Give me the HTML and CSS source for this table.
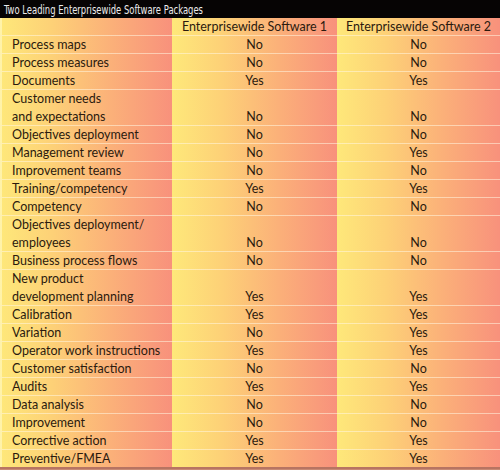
FILE: index.html
```html
<!DOCTYPE html>
<html>
<head>
<meta charset="utf-8">
<link rel="stylesheet" href="styles.css">
</head>
<body>
<div class="panel">
  <div class="title"><span class="title-text">Two Leading Enterprisewide Software Packages</span></div>
  <div class="grid">
    <div class="cell c1 head"></div><div class="cell c2 head">Enterprisewide Software 1</div><div class="cell c3 head">Enterprisewide Software 2</div>
    <div class="cell c1">Process maps</div><div class="cell c2">No</div><div class="cell c3">No</div>
    <div class="cell c1">Process measures</div><div class="cell c2">No</div><div class="cell c3">No</div>
    <div class="cell c1">Documents</div><div class="cell c2">Yes</div><div class="cell c3">Yes</div>
    <div class="cell c1 two">Customer needs<br>and expectations</div><div class="cell c2">No</div><div class="cell c3">No</div>
    <div class="cell c1">Objectives deployment</div><div class="cell c2">No</div><div class="cell c3">No</div>
    <div class="cell c1">Management review</div><div class="cell c2">No</div><div class="cell c3">Yes</div>
    <div class="cell c1">Improvement teams</div><div class="cell c2">No</div><div class="cell c3">No</div>
    <div class="cell c1">Training/competency</div><div class="cell c2">Yes</div><div class="cell c3">Yes</div>
    <div class="cell c1">Competency</div><div class="cell c2">No</div><div class="cell c3">No</div>
    <div class="cell c1 two">Objectives deployment/<br>employees</div><div class="cell c2">No</div><div class="cell c3">No</div>
    <div class="cell c1">Business process flows</div><div class="cell c2">No</div><div class="cell c3">No</div>
    <div class="cell c1 two">New product<br>development planning</div><div class="cell c2">Yes</div><div class="cell c3">Yes</div>
    <div class="cell c1">Calibration</div><div class="cell c2">Yes</div><div class="cell c3">Yes</div>
    <div class="cell c1">Variation</div><div class="cell c2">No</div><div class="cell c3">Yes</div>
    <div class="cell c1">Operator work instructions</div><div class="cell c2">Yes</div><div class="cell c3">Yes</div>
    <div class="cell c1">Customer satisfaction</div><div class="cell c2">No</div><div class="cell c3">No</div>
    <div class="cell c1">Audits</div><div class="cell c2">Yes</div><div class="cell c3">Yes</div>
    <div class="cell c1">Data analysis</div><div class="cell c2">No</div><div class="cell c3">No</div>
    <div class="cell c1">Improvement</div><div class="cell c2">No</div><div class="cell c3">No</div>
    <div class="cell c1">Corrective action</div><div class="cell c2">Yes</div><div class="cell c3">Yes</div>
    <div class="cell c1 last">Preventive/FMEA</div><div class="cell c2 last">Yes</div><div class="cell c3 last">Yes</div>
  </div>
</div>
</body>
</html>
```
FILE: styles.css
```css
html, body {
  margin: 0;
  padding: 0;
  background: #c98a74;
}
.panel {
  width: 500px;
  height: 470px;
  overflow: hidden;
  font-family: Lato, "Open Sans", sans-serif;
  color: #2b1a0e;
}
.title {
  height: 18px;
  background: #060404;
  color: #ececec;
  display: flex;
  align-items: center;
  padding-left: 4px;
  overflow: hidden;
}
.title-text {
  font-family: "Liberation Sans Narrow", "DejaVu Sans Condensed", "DejaVu Sans", sans-serif;
  font-stretch: condensed;
  font-size: 13px;
  white-space: nowrap;
  display: inline-block;
  transform-origin: left center;
  transform: scaleX(0.72);
}
.grid {
  display: grid;
  grid-template-columns: 172px 165px 163px;
}
.cell {
  font-size: 12.5px;
  line-height: 17px;
  min-height: 17px;
  border-bottom: 1px solid rgba(255, 245, 225, 0.55);
  background: linear-gradient(to right, #fee87a 0%, #fdd177 30%, #fbb079 65%, #f8917c 100%);
  display: flex;
  align-items: flex-end;
  white-space: nowrap;
}
.c1 {
  padding-left: 12px;
  box-shadow: inset 2px 0 0 rgba(255, 250, 200, 0.6);
}
.two {
  min-height: 35px;
  line-height: 17.5px;
}
.c2, .c3 {
  justify-content: center;
}
.head {
  height: 17px;
}
.last {
  border-bottom: 2px solid #b77462;
}
```
